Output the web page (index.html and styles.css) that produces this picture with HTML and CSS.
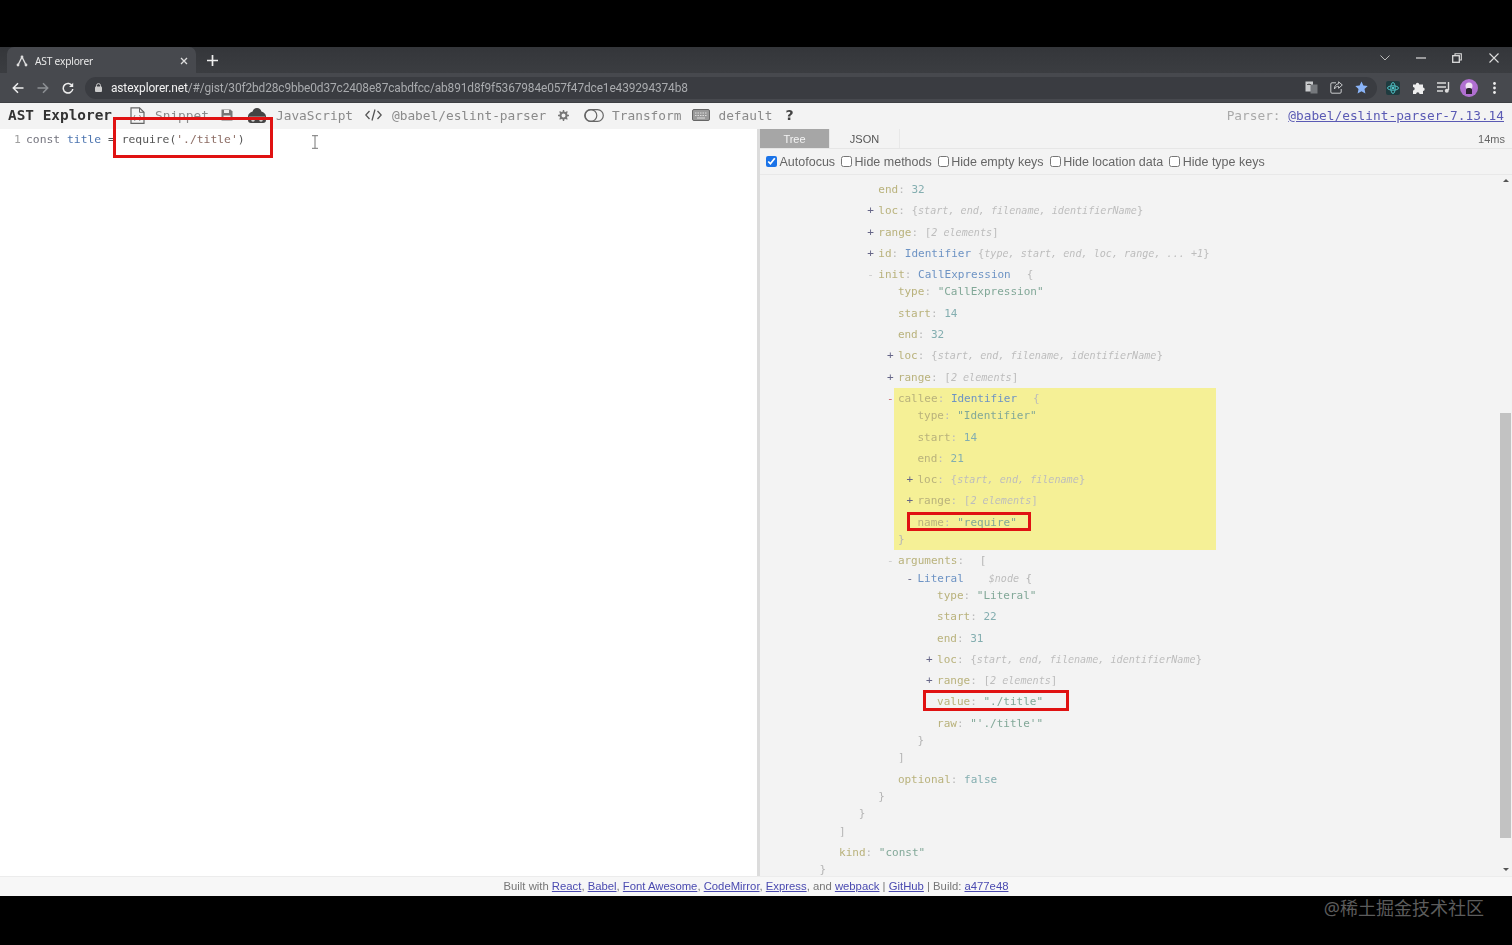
FILE: index.html
```html
<!DOCTYPE html>
<html lang="en">

<head>
    <meta charset="UTF-8">
    <title>AST explorer</title>
    <link rel="stylesheet" href="styles.css">
</head>

<body>
    <div class="letterbox_top"></div>

    <div class="screen">
        <div class="tab_strip">
            <div class="tab">
                <svg class="favicon" width="12" height="12" viewBox="0 0 12 12"><path d="M6 2 2 10M6 2l4 8" fill="none" stroke="#ddd" stroke-width="1.4"/><circle cx="6" cy="2" r="1.4" fill="#ddd"/><circle cx="2" cy="10" r="1.4" fill="#ddd"/><circle cx="10" cy="10" r="1.4" fill="#ddd"/></svg>
                <span class="tab_title">AST explorer</span>
                <svg class="tab_close" width="8" height="8" viewBox="0 0 8 8"><path d="M1 1l6 6M7 1 1 7" stroke="#ddd" stroke-width="1.3"/></svg>
            </div>
            <svg class="new_tab" width="11" height="11" viewBox="0 0 11 11"><path d="M5.5 0v11M0 5.5h11" stroke="#eee" stroke-width="1.7"/></svg>
            <div class="window_btns">
                <svg width="10" height="6" viewBox="0 0 10 6"><path d="M.5.5 5 5 9.5.5" fill="none" stroke="#bbb"/></svg>
                <svg class="win_min" width="10" height="2" viewBox="0 0 10 2"><path d="M0 1h10" stroke="#ddd" stroke-width="1.2"/></svg>
                <svg class="win_max" width="10" height="10" viewBox="0 0 10 10"><path d="M3 2.5V.7h6.3V7H7.5" fill="none" stroke="#ddd" stroke-width="1.1"/><rect x=".7" y="2.7" width="6.6" height="6.6" fill="none" stroke="#ddd" stroke-width="1.3"/></svg>
                <svg class="win_close" width="10" height="10" viewBox="0 0 10 10"><path d="M.5.5l9 9M9.5.5l-9 9" stroke="#ddd" stroke-width="1.1"/></svg>
            </div>
        </div>

        <div class="address_bar">
            <svg class="nav_icon" width="12" height="12" viewBox="0 0 12 12"><path d="M11.5 6H1.5M6 1.3 1.3 6 6 10.7" fill="none" stroke="#eee" stroke-width="1.5"/></svg>
            <svg class="nav_icon" width="12" height="12" viewBox="0 0 12 12"><path d="M.5 6h10M6 1.3 10.7 6 6 10.7" fill="none" stroke="#8d9094" stroke-width="1.5"/></svg>
            <svg class="nav_icon" width="12" height="12" viewBox="0 0 12 12"><path d="M10.3 4A4.8 4.8 0 1 0 10.8 7" fill="none" stroke="#eee" stroke-width="1.5"/><path d="M11.2.8v4.1H7.1z" fill="#eee"/></svg>
            <div class="omnibox">
                <svg width="7" height="9" viewBox="0 0 7 9"><path d="M1.5 4V2.6a2 2 0 0 1 4 0V4" fill="none" stroke="#ccc"/><rect y="3.6" width="7" height="5.4" rx="1" fill="#ccc"/></svg>
                <span class="url"><b>astexplorer.net</b>/#/gist/30f2bd28c9bbe0d37c2408e87cabdfcc/ab891d8f9f5367984e057f47dce1e439294374b8</span>
                <div class="omni_icons">
                    <svg width="13" height="13" viewBox="0 0 13 13"><rect x=".5" y=".5" width="7.5" height="10" fill="#c9cbcd"/><rect x="5.5" y="3.5" width="7" height="9" fill="#75787c"/><path d="M2 3.5h4M4 2.5v1" stroke="#555"/></svg>
                    <svg width="13" height="13" viewBox="0 0 13 13"><path d="M6 1.8H2A1.2 1.2 0 0 0 .8 3v8A1.2 1.2 0 0 0 2 12.2h8a1.2 1.2 0 0 0 1.2-1.2V8" fill="none" stroke="#c9cbcd"/><path d="M12.3 4 8.6.8v2C6 3 4.5 5 4.4 8 5.6 6 7 5.300 8.600 5.300v2z" fill="none" stroke="#c9cbcd"/></svg>
                    <svg width="13" height="13" viewBox="0 0 13 13"><path d="M6.500.5l1.900 4 4.300.5-3.200 3 .9 4.400-3.900-2.200-3.900 2.200.9-4.400-3.200-3 4.300-.5z" fill="#8ab4f8"/></svg>
                </div>
            </div>
            <div class="ext_icons">
                <svg width="14" height="14" viewBox="0 0 14 14"><rect width="14" height="14" rx="2" fill="#1f3b3f"/><ellipse cx="7" cy="7" rx="5.500" ry="2.200" fill="none" stroke="#4fc3c7"/><ellipse cx="7" cy="7" rx="2.200" ry="5.500" fill="none" stroke="#4fc3c7"/><circle cx="7" cy="7" r="1.300" fill="#4fc3c7"/></svg>
                <svg width="13" height="13" viewBox="0 0 13 13"><path d="M1 3.500h2.800a1.700 1.700 0 1 1 3.400 0H11v3a1.700 1.700 0 1 1 0 3.400V13H7.500a1.700 1.700 0 1 0-3.400 0H1V9.500a1.700 1.700 0 1 0 0-3.400z" fill="#eee"/></svg>
                <svg width="13" height="11" viewBox="0 0 13 11"><path d="M0 1h9M0 5h9M0 9h6" stroke="#ddd" stroke-width="1.400"/><path d="M11.500 0v8" stroke="#ddd" stroke-width="1.400"/><circle cx="9.800" cy="8.800" r="2" fill="#ddd"/></svg>
                <svg class="avatar" width="18" height="18" viewBox="0 0 18 18"><circle cx="9" cy="9" r="9" fill="#b06fd0"/><circle cx="9" cy="7" r="3.500" fill="#f0e4f2"/><path d="M6 15V10.500C6 8.500 12 8.500 12 10.500V15z" fill="#2b2330"/></svg>
                <svg class="chrome_menu" width="3" height="12" viewBox="0 0 3 12"><circle cx="1.500" cy="1.500" r="1.400" fill="#eee"/><circle cx="1.500" cy="6" r="1.400" fill="#eee"/><circle cx="1.500" cy="10.500" r="1.400" fill="#eee"/></svg>
            </div>
        </div>

        <div class="app">
            <div class="menu">
                <h1 class="brand">AST Explorer</h1>
                <div class="menu_group snippet">
                    <svg width="15" height="17" viewBox="0 0 15 17"><path d="M1 .8h8.500L14 5.300v11H1z" fill="none" stroke="#666" stroke-width="1.200"/><path d="M9.500.8v4.500H14" fill="none" stroke="#666"/><path d="M5 8 3.500 11 5 14M9.500 8l1.500 3-1.500 3" fill="none" stroke="#888"/></svg>
                    <span class="menu_text snippet_text">Snippet</span>
                    <svg class="save" width="12" height="12" viewBox="0 0 12 12"><path d="M.5.5h9l2 2v9H.5z" fill="#777"/><rect x="3" y="1" width="5" height="3" fill="#eee"/><rect x="2.500" y="6.500" width="7" height="4" fill="#eee"/></svg>
                </div>
                <div class="menu_group lang">
                    <svg width="18" height="15" viewBox="0 0 18 15"><path d="M9 0a4.500 4.500 0 0 1 4.400 3.500C16 4.500 18 6 18 8.500V12a3 3 0 0 1-3 3H3a3 3 0 0 1-3-3V8.500C0 6 2 4.500 4.600 3.500A4.500 4.500 0 0 1 9 0z" fill="#444"/><rect x="1" y="8" width="16" height="3" fill="#777"/><circle cx="5" cy="12" r="1.800" fill="#ccc"/><circle cx="13" cy="12" r="1.800" fill="#ccc"/></svg>
                    <span class="menu_text">JavaScript</span>
                </div>
                <div class="menu_group parser">
                    <svg width="17" height="12" viewBox="0 0 17 12"><path d="M4.500 2 .8 6l3.700 4M12.500 2l3.700 4-3.700 4M10 .5 7 11.500" fill="none" stroke="#555" stroke-width="1.300"/></svg>
                    <span class="menu_text">@babel/eslint-parser</span>
                    <svg class="gear" width="11" height="11" viewBox="0 0 11 11"><circle cx="5.500" cy="5.500" r="3" fill="none" stroke="#777" stroke-width="2"/><path d="M5.500 0v11M0 5.500h11M1.600 1.600l7.800 7.800M9.400 1.600 1.600 9.400" stroke="#777" stroke-width="1.400" stroke-dasharray="2 7 2"/></svg>
                    <svg class="switch" width="20" height="13" viewBox="0 0 20 13"><rect x=".7" y=".7" width="18.600" height="11.600" rx="5.800" fill="none" stroke="#666" stroke-width="1.200"/><circle cx="7" cy="6.500" r="5.800" fill="none" stroke="#666" stroke-width="1.200"/></svg>
                    <span class="menu_text">Transform</span>
                </div>
                <div class="menu_group keys">
                    <svg width="18" height="12" viewBox="0 0 18 12"><rect x=".5" y=".5" width="17" height="11" rx="1.500" fill="#999" stroke="#666"/><path d="M3 4h12M3 6.500h12" stroke="#ddd" stroke-dasharray="1.500 1"/><path d="M5 9h8" stroke="#ddd"/></svg>
                    <span class="menu_text">default</span>
                </div>
                <span class="help">?</span>
                <div class="parser_info">Parser: <a href="#">@babel/eslint-parser-7.13.14</a></div>
            </div>

            <div class="panes">
                <div class="editor">
                    <span class="line_no">1</span>
                    <code class="code"><span class="kw">const</span> <span class="def">title</span> = require(<span class="str">'./title'</span>)</code>
                </div>

                <div class="output">
                    <div class="tabs">
                        <button class="tab_btn active">Tree</button>
                        <button class="tab_btn">JSON</button>
                        <span class="time">14ms</span>
                    </div>
                    <form class="options">
                        <label><input type="checkbox" checked>Autofocus</label>
                        <label><input type="checkbox">Hide methods</label>
                        <label><input type="checkbox">Hide empty keys</label>
                        <label><input type="checkbox">Hide location data</label>
                        <label><input type="checkbox">Hide type keys</label>
                    </form>

                    <div class="tree_wrap">
                        <ul class="tree root">
                            <li>
                                <ul class="tree">
                                    <li>
                                        <ul class="tree">
                                            <li>
                                                <ul class="tree">
                                                    <li><span class="key">end</span>: <span class="num">32</span></li>
                                                    <li><i class="toggle">+</i><span class="key">loc</span>: <span class="hint">{<em>start, end, filename, identifierName</em>}</span></li>
                                                    <li><i class="toggle">+</i><span class="key">range</span>: <span class="hint">[<em>2 elements</em>]</span></li>
                                                    <li><i class="toggle">+</i><span class="key">id</span>: <span class="type">Identifier</span> <span class="hint">{<em>type, start, end, loc, range, ... +1</em>}</span></li>
                                                    <li><i class="toggle light">-</i><span class="key">init</span>: <span class="type">CallExpression</span><span class="brace">{</span>
                                                        <ul class="tree">
                                                            <li><span class="key">type</span>: <span class="str_val">"CallExpression"</span></li>
                                                            <li><span class="key">start</span>: <span class="num">14</span></li>
                                                            <li><span class="key">end</span>: <span class="num">32</span></li>
                                                            <li><i class="toggle">+</i><span class="key">loc</span>: <span class="hint">{<em>start, end, filename, identifierName</em>}</span></li>
                                                            <li><i class="toggle">+</i><span class="key">range</span>: <span class="hint">[<em>2 elements</em>]</span></li>
                                                            <li class="highlighted"><i class="toggle red">-</i><span class="key">callee</span>: <span class="type">Identifier</span><span class="brace">{</span>
                                                                <ul class="tree">
                                                                    <li><span class="key">type</span>: <span class="str_val">"Identifier"</span></li>
                                                                    <li><span class="key">start</span>: <span class="num">14</span></li>
                                                                    <li><span class="key">end</span>: <span class="num">21</span></li>
                                                                    <li><i class="toggle">+</i><span class="key">loc</span>: <span class="hint">{<em>start, end, filename</em>}</span></li>
                                                                    <li><i class="toggle">+</i><span class="key">range</span>: <span class="hint">[<em>2 elements</em>]</span></li>
                                                                    <li><span class="key">name</span>: <span class="str_val">"require"</span><span class="red_box name_box"></span></li>
                                                                </ul>
                                                                <span class="closer">}</span>
                                                            </li>
                                                            <li><i class="toggle light">-</i><span class="key">arguments</span>: <span class="closer bracket">[</span>
                                                                <ul class="tree">
                                                                    <li><i class="toggle">-</i><span class="type">Literal</span><span class="node_tag">$node</span> <span class="closer">{</span>
                                                                        <ul class="tree">
                                                                            <li><span class="key">type</span>: <span class="str_val">"Literal"</span></li>
                                                                            <li><span class="key">start</span>: <span class="num">22</span></li>
                                                                            <li><span class="key">end</span>: <span class="num">31</span></li>
                                                                            <li><i class="toggle">+</i><span class="key">loc</span>: <span class="hint">{<em>start, end, filename, identifierName</em>}</span></li>
                                                                            <li><i class="toggle">+</i><span class="key">range</span>: <span class="hint">[<em>2 elements</em>]</span></li>
                                                                            <li><span class="key">value</span>: <span class="str_val">"./title"</span><span class="red_box value_box"></span></li>
                                                                            <li><span class="key">raw</span>: <span class="str_val">"'./title'"</span></li>
                                                                        </ul>
                                                                        <span class="closer">}</span>
                                                                    </li>
                                                                </ul>
                                                                <span class="closer">]</span>
                                                            </li>
                                                            <li><span class="key">optional</span>: <span class="num">false</span></li>
                                                        </ul>
                                                        <span class="closer">}</span>
                                                    </li>
                                                </ul>
                                                <span class="closer">}</span>
                                            </li>
                                        </ul>
                                        <span class="closer">]</span>
                                    </li>
                                    <li><span class="key">kind</span>: <span class="str_val">"const"</span></li>
                                </ul>
                                <span class="closer">}</span>
                            </li>
                        </ul>
                        <div class="scrollbar"><div class="thumb"></div></div>
                    </div>
                </div>
            </div>

            <div class="footer">Built with <a href="#">React</a>, <a href="#">Babel</a>, <a href="#">Font Awesome</a>, <a href="#">CodeMirror</a>, <a href="#">Express</a>, and <a href="#">webpack</a> | <a href="#">GitHub</a> | Build: <a href="#">a477e48</a></div>
        </div>
    </div>

    <div class="letterbox_bottom">@稀土掘金技术社区</div>

    <!-- annotations drawn over the recording -->
    <div class="red_box require_box"></div>
    <svg class="ibeam" width="8" height="14" viewBox="0 0 8 14"><path d="M1 .7h6M1 13.300h6M4 .7v12.600" fill="none" stroke="#777"/></svg>
</body>

</html>
```

FILE: styles.css
```css
* {
    margin: 0;
    padding: 0;
    box-sizing: border-box;
}

html,
body {
    width: 1512px;
    height: 945px;
    overflow: hidden;
    background-color: #000;
}

body {
    position: relative;
    display: flex;
    flex-direction: column;
    font-family: "Liberation Sans", sans-serif;
}

svg {
    display: block;
    flex: none;
}

.letterbox_top {
    height: 47px;
}

.screen {
    height: 849px;
    display: flex;
    flex-direction: column;
    filter: blur(0.55px);
}

.letterbox_bottom {
    flex: 1;
    padding: 1px 28px 0 0;
    text-align: right;
    font-family: "Noto Sans", "Noto Sans CJK SC", sans-serif;
    font-size: 18px;
    line-height: 22px;
    color: #5c5c5c;
}

/* browser */
.tab_strip {
    display: flex;
    align-items: flex-end;
    height: 26px;
    padding-left: 7px;
    background: linear-gradient(#34363a, #3b3d41);
}

.tab {
    display: flex;
    align-items: center;
    width: 189px;
    height: 26px;
    padding: 2px 8px 0 9px;
    border-radius: 7px 7px 0 0;
    background-color: #47494e;
}

.favicon {
    margin-right: 7px;
}

.tab_title {
    flex: 1;
    font-family: "Noto Sans", sans-serif;
    font-size: 10.2px;
    letter-spacing: -0.2px;
    color: #e8e8e8;
}

.new_tab {
    margin: 0 0 7px 11px;
}

.window_btns {
    display: flex;
    align-items: center;
    height: 22px;
    margin-left: auto;
    align-self: flex-start;
}

.window_btns svg:first-child {
    margin-right: 26px;
}

.win_min {
    margin-right: 26px;
}

.win_max {
    margin-right: 27px;
}

.win_close {
    margin-right: 13px;
}

.address_bar {
    display: flex;
    align-items: center;
    height: 30px;
    padding-left: 11.500px;
    background-color: #47494e;
    border-bottom: 1px solid #3d3f43;
}

.nav_icon {
    margin-right: 13px;
}

.omnibox {
    display: flex;
    align-items: center;
    width: 1292px;
    height: 22px;
    margin-left: -1.500px;
    padding-left: 10px;
    border-radius: 11px;
    background-color: #3a3c41;
}

.url {
    margin-left: 9px;
    font-family: "Roboto", sans-serif;
    font-size: 11.9px;
    letter-spacing: -0.12px;
    color: #a9abae;
}

.url b {
    font-weight: 400;
    color: #f1f1f1;
}

.omni_icons {
    display: flex;
    align-items: center;
    gap: 12px;
    margin-left: auto;
    padding-right: 9px;
}

.ext_icons {
    display: flex;
    align-items: center;
    gap: 12px;
    margin-left: 9px;
}

.ext_icons .avatar {
    margin-left: -2px;
}

.ext_icons .chrome_menu {
    margin-left: 3px;
}

/* app */
.app {
    flex: 1;
    display: flex;
    flex-direction: column;
    min-height: 0;
    background-color: #f3f3f3;
}

.menu {
    display: flex;
    align-items: center;
    height: 26px;
    padding: 0 8px 2px;
    font-family: "DejaVu Sans Mono", monospace;
    background-color: #f3f3f3;
}

.brand {
    width: 122px;
    font-size: 14.4px;
    font-weight: 700;
    color: #333;
}

.menu_group {
    display: flex;
    align-items: center;
}

.menu_text {
    font-size: 12.8px;
    color: #8a8a8a;
}

.snippet {
    width: 118px;
}

.snippet_text {
    margin-left: 10px;
}

.save {
    margin-left: 12px;
}

.lang {
    width: 117px;
}

.lang .menu_text {
    margin-left: 10px;
}

.parser > svg:first-child {
    margin-right: 10px;
}

.gear {
    margin-left: 12px;
}

.switch {
    margin: 0 8px 0 15px;
}

.keys {
    margin-left: 11px;
}

.keys .menu_text {
    margin-left: 8px;
}

.help {
    margin-left: 13px;
    font-family: "DejaVu Sans", sans-serif;
    font-size: 14px;
    font-weight: 700;
    color: #444;
}

.parser_info {
    margin-left: auto;
    font-size: 12.8px;
    color: #aaa;
}

.parser_info a {
    color: #5a5ab4;
}

.panes {
    flex: 1;
    display: flex;
    min-height: 0;
}

.editor {
    display: flex;
    align-items: flex-start;
    width: 757px;
    padding: 2px 0 0 14px;
    font-family: "DejaVu Sans Mono", monospace;
    font-size: 11.35px;
    line-height: 17px;
    background-color: #fff;
}

.line_no {
    width: 12px;
    color: #a0a0a0;
}

.code {
    font-family: inherit;
    color: #555;
}

.kw {
    color: #75757f;
}

.def {
    color: #4d75b0;
}

.str {
    color: #8c6c64;
}

.output {
    flex: 1;
    display: flex;
    flex-direction: column;
    min-width: 0;
    border-left: 3px solid #dcdcdc;
}

.tabs {
    display: flex;
    align-items: stretch;
    height: 20px;
    border-bottom: 1px solid #e6e6e6;
}

.tab_btn {
    width: 70px;
    border: 0;
    border-right: 1px solid #e8e8e8;
    font-family: "Liberation Sans", sans-serif;
    font-size: 11px;
    color: #555;
    background-color: transparent;
}

.tab_btn.active {
    color: #f4f4f4;
    background-color: #a6a6a6;
}

.time {
    margin-left: auto;
    padding-right: 7px;
    font-size: 11px;
    line-height: 20px;
    color: #666;
}

.options {
    display: flex;
    align-items: center;
    height: 26px;
    padding-left: 6px;
    font-family: "Liberation Sans", sans-serif;
    font-size: 12.5px;
    color: #666;
    border-bottom: 1px solid #e8e8e8;
}

.options label {
    display: flex;
    align-items: center;
    margin-right: 6px;
}

.options input {
    width: 11px;
    height: 11px;
    margin-right: 2.5px;
    accent-color: #1a73e8;
}

.tree_wrap {
    position: relative;
    flex: 1;
    display: flex;
    min-height: 0;
    overflow: hidden;
}

.root {
    flex: 1;
    padding: 6px 0 0 59.5px;
}

.tree {
    list-style: none;
    font-family: "DejaVu Sans Mono", monospace;
    font-size: 11px;
    line-height: 17.3px;
    color: #bbb;
}

.tree .tree {
    padding-left: 19.6px;
}

.tree li {
    position: relative;
}

.tree li + li {
    margin-top: 4px;
}

.closer {
    color: #b5b5b5;
}

.key {
    color: #b9b27c;
}

.num {
    color: #84aeb0;
}

.str_val {
    color: #82a898;
}

.type {
    color: #6d93c4;
}

.hint {
    color: #bdbdbd;
}

.hint em {
    font-size: 10.1px;
}

.brace {
    margin-left: 16px;
}

.bracket {
    margin-left: 9px;
}

.node_tag {
    margin-left: 25px;
    font-size: 10px;
    font-style: italic;
    color: #bdbdbd;
}

.toggle {
    position: absolute;
    left: -11px;
    top: 0;
    font-style: normal;
    color: #668;
}

.toggle.light {
    color: #ccc;
}

.toggle.red {
    color: #c66;
}

.tree li.highlighted {
    width: 322px;
    margin: 2px 0 -2px -4px;
    padding: 2px 0 2px 4px;
    background-color: #f5f096;
}

.highlighted .toggle {
    left: -7px;
    top: 2px;
}

.highlighted .tree .toggle {
    left: -11px;
    top: 0;
}

.scrollbar {
    position: relative;
    width: 12px;
    padding-top: 238px;
    background-color: #f3f3f3;
}

.scrollbar::before,
.scrollbar::after {
    content: "";
    position: absolute;
    left: 3px;
    border-left: 3px solid transparent;
    border-right: 3px solid transparent;
}

.scrollbar::before {
    top: 4px;
    border-bottom: 3px solid #555;
}

.scrollbar::after {
    bottom: 5px;
    border-top: 3px solid #555;
}

.thumb {
    width: 11px;
    height: 425px;
    background-color: #c2c2c2;
}

.footer {
    height: 20px;
    font-size: 11.3px;
    line-height: 18px;
    text-align: center;
    color: #777;
    background-color: #f7f7f7;
    border-top: 1px solid #ececec;
}

.footer a {
    color: #4a4ab0;
}

/* annotations */
.red_box {
    position: absolute;
    border: 3px solid #e01212;
    z-index: 2;
}

.require_box {
    top: 117px;
    left: 113px;
    width: 160px;
    height: 41px;
}

.name_box {
    top: -2px;
    left: -10px;
    width: 124px;
    height: 19px;
}

.value_box {
    top: -3px;
    left: -14px;
    width: 146px;
    height: 21px;
}

.ibeam {
    position: absolute;
    top: 135px;
    left: 311px;
}
```
